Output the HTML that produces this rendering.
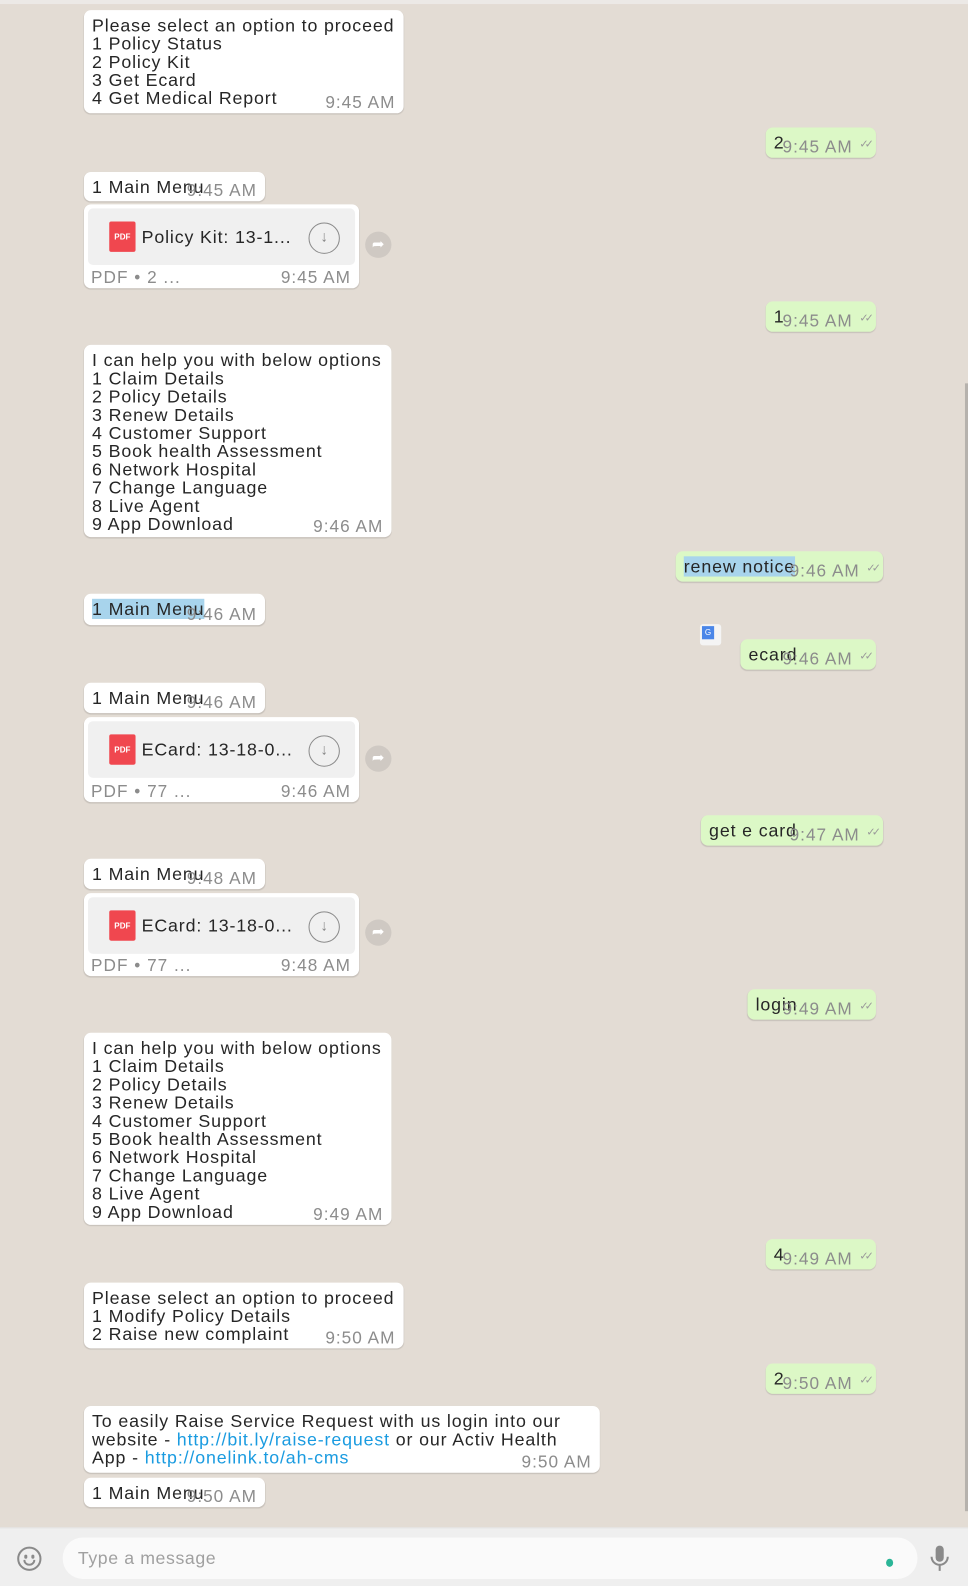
<!DOCTYPE html>
<html><head><meta charset="utf-8"><style>
*{margin:0;padding:0;box-sizing:border-box}
html,body{width:968px;height:1586px;overflow:hidden}
body{background:#e3dcd4;font-family:"Liberation Sans",sans-serif;position:relative;color:#262626}
#w{position:absolute;left:0;top:0;width:957px;height:1568px;transform:scale(1.0115);transform-origin:0 0}
.b{position:absolute;background:#fff;border-radius:7px;box-shadow:0 1px 1px rgba(0,0,0,.13);font-size:17.6px;letter-spacing:0.85px;line-height:18px;padding:6px 8px;white-space:nowrap}
.o{background:#dcf8c6}
.t{position:absolute;right:8px;bottom:0px;font-size:17px;letter-spacing:1px;color:#8c8c8c;line-height:20px}
.o .t{right:23px}
.ck{position:absolute;right:6px;bottom:4px;font-size:11px;color:#9a9a9a;letter-spacing:-4px}
.doc{position:absolute;background:#fff;border-radius:7px;box-shadow:0 1px 1px rgba(0,0,0,.13);width:272px;height:83px}
.in{position:absolute;left:4px;top:4px;width:264px;height:56px;background:#f0f0f0;border-radius:5px}
.pdf{position:absolute;left:21px;top:13px;width:26px;height:30px;background:#f0474f;border-radius:2px;color:#fff;font-size:8px;font-weight:bold;line-height:32px;text-align:center}
.dn{position:absolute;left:53px;top:18px;font-size:17.6px;letter-spacing:0.85px;white-space:nowrap}
.dl{position:absolute;left:218px;top:14px;width:31px;height:31px;border:1.5px solid #8a8a8a;border-radius:50%;color:#8a8a8a;text-align:center;font-size:15px;line-height:28px;font-weight:bold}
.dm{position:absolute;left:7px;bottom:0px;font-size:17px;letter-spacing:1px;color:#8c8c8c;line-height:20px}
.dt{position:absolute;right:8px;bottom:0px;font-size:17px;letter-spacing:1px;color:#8c8c8c;line-height:20px}
.fw{position:absolute;width:26px;height:26px;border-radius:50%;background:#cfc9c3;color:#fff;font-size:15px;text-align:center;line-height:26px}
.sel{background:#a8d4ec}
a{color:#1a9be0;text-decoration:none}
</style></head><body><div id="w">
<div style="position:absolute;left:0;top:0;width:957px;height:4px;background:#ece9e6"></div>
<div style="position:absolute;left:954px;top:379px;width:3px;height:1115px;background:#b6b2ad"></div>

<div class="b" style="left:83px;top:10px;width:316px;height:102px">Please select an option to proceed<br>1 Policy Status<br>2 Policy Kit<br>3 Get Ecard<br>4 Get Medical Report<span class="t">9:45 AM</span></div>
<div class="b o" style="left:757px;top:126px;width:109px;height:30px">2<span class="t">9:45 AM</span><span class="ck">✓✓</span></div>

<div class="b" style="left:83px;top:170px;width:179px;height:29px">1 Main Menu<span class="t">9:45 AM</span></div>
<div class="doc" style="left:83px;top:202px"><div class="in"><div class="pdf">PDF</div><div class="dn">Policy Kit: 13-1...</div><div class="dl">↓</div></div><span class="dm">PDF • 2 ...</span><span class="dt">9:45 AM</span></div>
<div class="fw" style="left:361px;top:229px">➦</div>

<div class="b o" style="left:757px;top:298px;width:109px;height:30px">1<span class="t">9:45 AM</span><span class="ck">✓✓</span></div>

<div class="b" style="left:83px;top:341px;width:304px;height:190px">I can help you with below options<br>1 Claim Details<br>2 Policy Details<br>3 Renew Details<br>4 Customer Support<br>5 Book health Assessment<br>6 Network Hospital<br>7 Change Language<br>8 Live Agent<br>9 App Download<span class="t">9:46 AM</span></div>

<div class="b o" style="left:668px;top:545px;width:205px;height:30px"><span class="sel">renew notice</span><span class="t">9:46 AM</span><span class="ck">✓✓</span></div>
<div class="b" style="left:83px;top:587px;width:179px;height:31px"><span class="sel">1 Main Menu</span><span class="t">9:46 AM</span></div>
<div style="position:absolute;left:692px;top:617px;width:21px;height:21px;background:#f4f4f4;border-radius:3px"><div style="position:absolute;left:2px;top:2px;width:12px;height:13px;background:#4a86e8;color:#fff;font-size:8px;text-align:center;line-height:13px">G</div></div>
<div class="b o" style="left:732px;top:632px;width:134px;height:30px">ecard<span class="t">9:46 AM</span><span class="ck">✓✓</span></div>

<div class="b" style="left:83px;top:675px;width:179px;height:30px">1 Main Menu<span class="t">9:46 AM</span></div>
<div class="doc" style="left:83px;top:709px;height:84px"><div class="in"><div class="pdf">PDF</div><div class="dn">ECard: 13-18-0...</div><div class="dl">↓</div></div><span class="dm">PDF • 77 ...</span><span class="dt">9:46 AM</span></div>
<div class="fw" style="left:361px;top:737px">➦</div>

<div class="b o" style="left:693px;top:806px;width:180px;height:30px">get e card<span class="t">9:47 AM</span><span class="ck">✓✓</span></div>

<div class="b" style="left:83px;top:849px;width:179px;height:30px">1 Main Menu<span class="t">9:48 AM</span></div>
<div class="doc" style="left:83px;top:883px;height:82px"><div class="in"><div class="pdf">PDF</div><div class="dn">ECard: 13-18-0...</div><div class="dl">↓</div></div><span class="dm">PDF • 77 ...</span><span class="dt">9:48 AM</span></div>
<div class="fw" style="left:361px;top:909px">➦</div>

<div class="b o" style="left:739px;top:978px;width:127px;height:30px">login<span class="t">9:49 AM</span><span class="ck">✓✓</span></div>

<div class="b" style="left:83px;top:1021px;width:304px;height:190px">I can help you with below options<br>1 Claim Details<br>2 Policy Details<br>3 Renew Details<br>4 Customer Support<br>5 Book health Assessment<br>6 Network Hospital<br>7 Change Language<br>8 Live Agent<br>9 App Download<span class="t">9:49 AM</span></div>

<div class="b o" style="left:757px;top:1225px;width:109px;height:30px">4<span class="t">9:49 AM</span><span class="ck">✓✓</span></div>

<div class="b" style="left:83px;top:1268px;width:316px;height:65px">Please select an option to proceed<br>1 Modify Policy Details<br>2 Raise new complaint<span class="t">9:50 AM</span></div>

<div class="b o" style="left:757px;top:1348px;width:109px;height:30px">2<span class="t">9:50 AM</span><span class="ck">✓✓</span></div>

<div class="b" style="left:83px;top:1390px;width:510px;height:66px">To easily Raise Service Request with us login into our<br>website - <a>http://bit.ly/raise-request</a> or our Activ Health<br>App - <a>http://onelink.to/ah-cms</a><span class="t">9:50 AM</span></div>
<div class="b" style="left:83px;top:1461px;width:179px;height:29px">1 Main Menu<span class="t">9:50 AM</span></div>

<div style="position:absolute;left:0;top:1510px;width:957px;height:76px;background:#efefef;border-top:1px solid #e4e4e4"></div>
<div style="position:absolute;left:17px;top:1529px;width:24px;height:24px;border:2px solid #8a8a8a;border-radius:50%"><div style="position:absolute;left:5px;top:6px;width:3px;height:4px;background:#8a8a8a;border-radius:2px"></div><div style="position:absolute;left:12px;top:6px;width:3px;height:4px;background:#8a8a8a;border-radius:2px"></div><div style="position:absolute;left:4px;top:11px;width:12px;height:6px;border:2px solid #8a8a8a;border-top:none;border-radius:0 0 6px 6px"></div></div>
<div style="position:absolute;left:62px;top:1520px;width:845px;height:41px;background:#fafafa;border-radius:20px;color:#a0a0a0;font-size:17.5px;letter-spacing:0.6px;line-height:41px;padding-left:15px">Type a message</div>
<div style="position:absolute;left:876px;top:1541px;width:7px;height:8px;background:#2bb597;border-radius:50%"></div>
<svg style="position:absolute;left:918px;top:1527px" width="22" height="28" viewBox="0 0 22 28"><rect x="7" y="1" width="8" height="16" rx="4" fill="#8a8a8a"/><path d="M3 12a8 8 0 0 0 16 0" stroke="#8a8a8a" stroke-width="2" fill="none"/><path d="M11 20v6" stroke="#8a8a8a" stroke-width="2"/></svg>
</div></body></html>
